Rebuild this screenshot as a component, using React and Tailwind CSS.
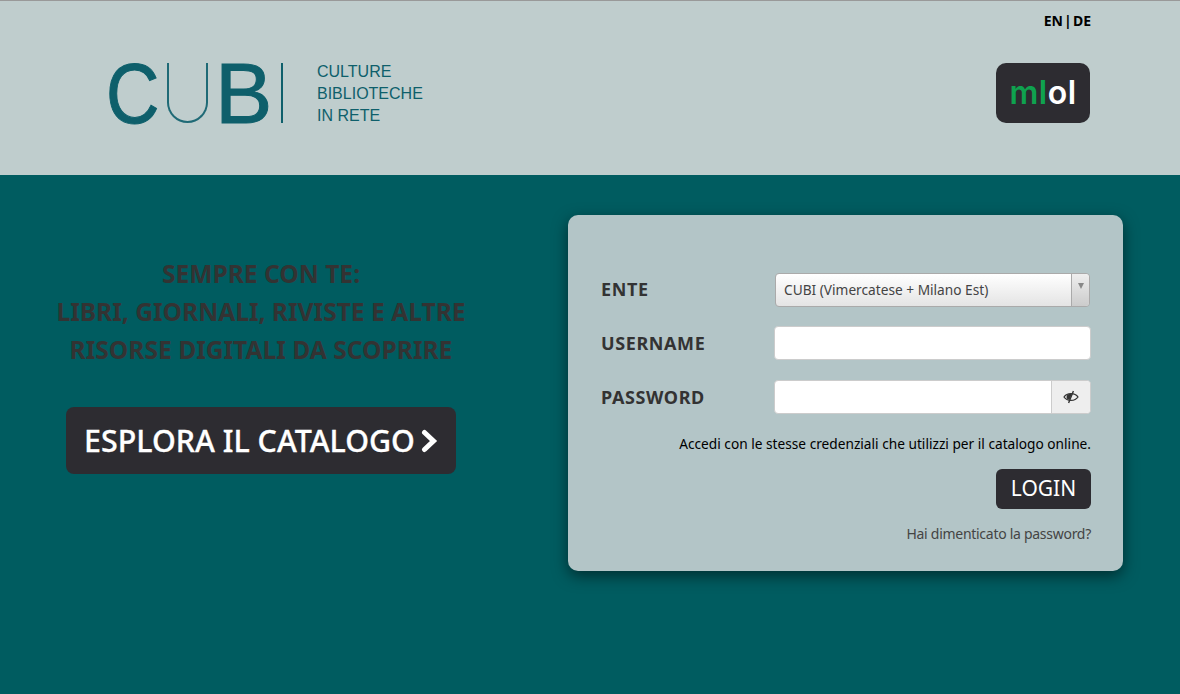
import React from 'react';

const font = "font-['Noto_Sans',sans-serif]";

// CUB logo: C and B are real text, the thin U is a css shape
const CubLogo = () => (
  <div className="flex items-center h-[64px] -ml-[3px]">
    <span className="font-['Liberation_Sans',sans-serif] text-[86px] leading-[64px] text-[#0e5f6b] w-[56px] inline-block origin-left scale-x-[0.86] [-webkit-text-stroke:1px_#0e5f6b]">C</span>
    <div className="ml-[5px] w-[41px] h-[60px] border-x-2 border-b-2 border-[#1f6a76] rounded-b-[21px]" />
    <span className="ml-[7px] font-['Liberation_Sans',sans-serif] text-[86px] leading-[64px] text-[#0e5f6b] w-[50px] [-webkit-text-stroke:1px_#0e5f6b]">B</span>
    <div className="ml-[16px] w-[2px] h-[60px] bg-[#0e5f6b]" />
    <div className="ml-[34px] pt-[2px] font-['Liberation_Sans',sans-serif] text-[16px] leading-[22px] text-[#0e5f6b]">
      <div>CULTURE</div>
      <div>BIBLIOTECHE</div>
      <div>IN RETE</div>
    </div>
  </div>
);

const MlolLogo = () => (
  <div className="w-[94px] h-[60px] rounded-[10px] bg-[#2d2c31] flex items-center justify-center">
    <span className="font-['Inter',sans-serif] font-semibold text-[32px] leading-none tracking-[0.5px]">
      <span className="text-[#0fa24f]">ml</span>
      <span className="text-white">ol</span>
    </span>
  </div>
);

const EyeSlash = () => (
  <svg width="16" height="14" viewBox="0 0 16 14" fill="none" stroke="#333333">
    <path d="M1 7 C4 2.5 12 2.5 15 7 C12 11.5 4 11.5 1 7 Z" strokeWidth="1.3" />
    <path d="M3.5 7 C3.5 4.5 6 3.5 9 3.8 L6.4 10 C4.6 9.6 3.5 8.6 3.5 7 Z" fill="#333333" stroke="none" />
    <path d="M10.4 1 L5.6 13" strokeWidth="1.4" />
  </svg>
);

const Label = ({ children, className = 'w-[173px]' }) => (
  <div className={`${className} shrink-0 text-[18px] font-bold tracking-[0.6px] text-[#333333]`}>{children}</div>
);

export default function App() {
  return (
    <div className={`${font} h-[694px] overflow-hidden bg-[#005c60]`}>
      <header className="h-[175px] bg-[#bfcdcd] border-t border-[#999999]">
        <div className="flex justify-end pr-[89px] pt-[11px] text-[14px] leading-[18px] font-bold text-black [word-spacing:-2.5px]">EN | DE</div>
        <div className="flex items-center justify-between pl-[109px] pr-[90px] mt-[31px]">
          <CubLogo />
          <MlolLogo />
        </div>
      </header>

      <main className="flex pt-[40px]">
        <div className="w-[522px] shrink-0 flex flex-col items-center pt-[40px]">
          <div className="text-center text-[24.6px] leading-[38px] font-bold text-[#333333]">
            <div>SEMPRE CON TE:</div>
            <div>LIBRI, GIORNALI, RIVISTE E ALTRE</div>
            <div>RISORSE DIGITALI DA SCOPRIRE</div>
          </div>
          <a className="mt-[38px] w-[390px] h-[67px] rounded-[8px] bg-[#2d2c31] flex items-center justify-center gap-[6px] text-white text-[30.4px] font-medium [-webkit-text-stroke:0.3px_white]">
            ESPLORA IL CATALOGO
            <svg width="17" height="24" viewBox="0 0 17 24" fill="none" stroke="currentColor" strokeWidth="5" strokeLinejoin="miter" strokeLinecap="round">
              <path d="M3.5 3.5 L12.5 12 L3.5 20.5" />
            </svg>
          </a>
        </div>

        <section className="ml-[46px] w-[555px] h-[356px] rounded-[10px] bg-[#b3c5c7] shadow-[0_5px_15px_rgba(0,0,0,0.5)] pl-[33px] pr-[32px] pt-[58px]">
          <div className="flex items-center h-[34px]">
            <Label className="w-[174px] -mt-[2px]">ENTE</Label>
            <div className="flex-1 mr-[1px] h-[34px] rounded-[4px] border border-[#aaaaaa] bg-gradient-to-b from-white to-[#e4e4e4] flex items-stretch">
              <div className="flex-1 pl-[8px] flex items-center text-[13.7px] text-[#444444]">CUBI (Vimercatese + Milano Est)</div>
              <div className="w-[18px] border-l border-[#aaaaaa] bg-gradient-to-b from-[#eeeeee] to-[#cccccc] flex justify-center pt-[9px] rounded-r-[4px]">
                <div className="w-0 h-0 border-x-[3px] border-x-transparent border-t-[6px] border-t-[#888888]" />
              </div>
            </div>
          </div>

          <div className="flex items-center h-[34px] mt-[19px]">
            <Label>USERNAME</Label>
            <div className="flex-1 h-[34px] rounded-[4px] border border-[#cccccc] bg-white" />
          </div>

          <div className="flex items-center h-[34px] mt-[20px]">
            <Label>PASSWORD</Label>
            <div className="flex-1 h-[34px] rounded-[4px] border border-[#cccccc] bg-white flex justify-end">
              <div className="w-[39px] rounded-r-[4px] border-l border-[#cccccc] bg-[#eeeeee] flex items-center justify-center">
                <EyeSlash />
              </div>
            </div>
          </div>

          <p className="mt-[20px] text-right text-[13.7px] leading-[20px] text-black">Accedi con le stesse credenziali che utilizzi per il catalogo online.</p>

          <div className="flex justify-end mt-[15px]">
            <button className="w-[95px] h-[40px] rounded-[6px] bg-[#2d2c31] text-white text-[21px]">LOGIN</button>
          </div>

          <p className="mt-[15px] text-right text-[14px] tracking-[-0.28px] leading-[20px] text-[#444444]">Hai dimenticato la password?</p>
        </section>
      </main>
    </div>
  );
}
